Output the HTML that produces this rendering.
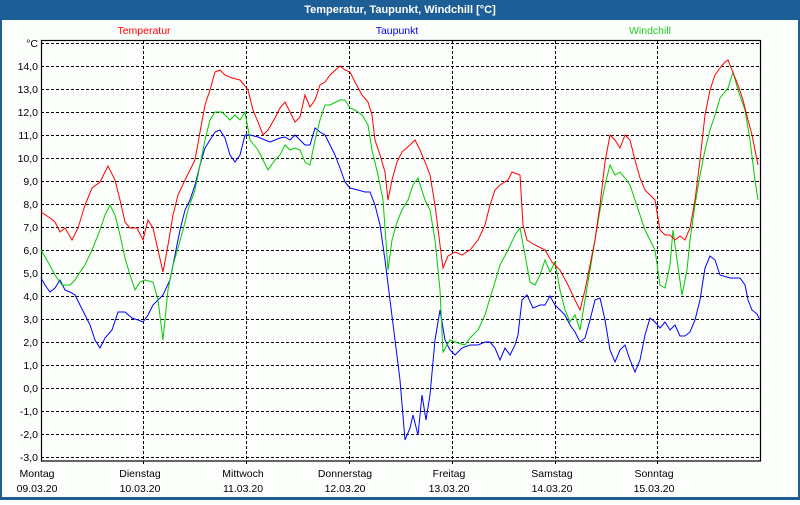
<!DOCTYPE html>
<html><head><meta charset="utf-8"><style>
html,body{margin:0;padding:0;}
body{width:800px;height:500px;overflow:hidden;background:#fff;font-family:"Liberation Sans",sans-serif;}
</style></head><body>
<svg width="800" height="500" xmlns="http://www.w3.org/2000/svg" font-family="Liberation Sans, sans-serif" font-size="10.5">
<rect x="0" y="0" width="800" height="500" fill="#1d5e96"/>
<rect x="2" y="20" width="796" height="477" fill="#fcfefc"/>
<text x="400" y="13" fill="#fff" font-weight="bold" font-size="11" text-anchor="middle">Temperatur, Taupunkt, Windchill [°C]</text>
<text x="144" y="34" fill="#f00" text-anchor="middle">Temperatur</text>
<text x="397" y="34" fill="#00f" text-anchor="middle">Taupunkt</text>
<text x="650" y="34" fill="#2c2" text-anchor="middle">Windchill</text>
<g stroke="#000" stroke-dasharray="3,2" stroke-width="1">
<line x1="41" x2="760" y1="43.5" y2="43.5"/>
<line x1="41" x2="760" y1="66.5" y2="66.5"/><line x1="41" x2="760" y1="89.5" y2="89.5"/>
<line x1="41" x2="760" y1="112.5" y2="112.5"/><line x1="41" x2="760" y1="135.5" y2="135.5"/>
<line x1="41" x2="760" y1="158.5" y2="158.5"/><line x1="41" x2="760" y1="181.5" y2="181.5"/>
<line x1="41" x2="760" y1="204.5" y2="204.5"/><line x1="41" x2="760" y1="227.5" y2="227.5"/>
<line x1="41" x2="760" y1="250.5" y2="250.5"/><line x1="41" x2="760" y1="273.5" y2="273.5"/>
<line x1="41" x2="760" y1="296.5" y2="296.5"/><line x1="41" x2="760" y1="319.5" y2="319.5"/>
<line x1="41" x2="760" y1="342.5" y2="342.5"/><line x1="41" x2="760" y1="365.5" y2="365.5"/>
<line x1="41" x2="760" y1="388.5" y2="388.5"/><line x1="41" x2="760" y1="411.5" y2="411.5"/>
<line x1="41" x2="760" y1="434.5" y2="434.5"/><line x1="41" x2="760" y1="457.5" y2="457.5"/>
<line x1="143.5" x2="143.5" y1="41" y2="465"/><line x1="246.5" x2="246.5" y1="41" y2="465"/>
<line x1="349.5" x2="349.5" y1="41" y2="465"/><line x1="452.5" x2="452.5" y1="41" y2="465"/>
<line x1="555.5" x2="555.5" y1="41" y2="465"/><line x1="657.5" x2="657.5" y1="41" y2="465"/>
</g>
<rect x="41.5" y="40.5" width="719" height="420.5" fill="none" stroke="#000" stroke-width="1.2"/>
<g font-size="10.5" fill="#000" text-anchor="end">
<text x="38" y="47">°C</text>
<text x="38" y="70">14,0</text><text x="38" y="93">13,0</text><text x="38" y="116">12,0</text>
<text x="38" y="139">11,0</text><text x="38" y="162">10,0</text><text x="38" y="185">9,0</text>
<text x="38" y="208">8,0</text><text x="38" y="231">7,0</text><text x="38" y="254">6,0</text>
<text x="38" y="277">5,0</text><text x="38" y="300">4,0</text><text x="38" y="323">3,0</text>
<text x="38" y="346">2,0</text><text x="38" y="369">1,0</text><text x="38" y="392">0,0</text>
<text x="38" y="415">-1,0</text><text x="38" y="438">-2,0</text><text x="38" y="461">-3,0</text>
</g>
<g font-size="10.5" fill="#000" text-anchor="middle">
<text x="37" y="477">Montag</text><text x="37" y="492">09.03.20</text>
<text x="140" y="477">Dienstag</text><text x="140" y="492">10.03.20</text>
<text x="243" y="477">Mittwoch</text><text x="243" y="492">11.03.20</text>
<text x="345" y="477">Donnerstag</text><text x="345" y="492">12.03.20</text>
<text x="449" y="477">Freitag</text><text x="449" y="492">13.03.20</text>
<text x="552" y="477">Samstag</text><text x="552" y="492">14.03.20</text>
<text x="654" y="477">Sonntag</text><text x="654" y="492">15.03.20</text>
</g>
<polyline fill="none" stroke="#00f" stroke-width="1" points="41,278 45,285 50,292 55,288 60,280 65,290 70,292 75,295 80,305 85,315 90,325 95,340 100,348 105,338 112,330 118,312 125,312 132,318 138,320 143,322 148,315 153,305 158,300 163,295 170,280 175,255 180,230 185,210 190,200 195,185 200,165 205,148 210,140 215,132 220,130 225,138 230,155 235,162 240,155 245,135 250,135 258,137 265,140 270,142 275,140 280,138 285,137 290,140 295,135 300,140 305,145 310,145 315,128 320,132 325,135 330,145 335,155 340,168 345,182 350,188 358,190 365,192 370,192 375,205 380,225 385,260 390,300 395,340 400,380 405,440 410,428 413,415 418,435 422,395 426,420 430,395 435,340 440,310 445,340 450,350 455,355 462,348 470,345 478,345 485,342 490,342 495,348 500,360 505,348 510,355 515,345 518,335 522,300 527,295 533,308 540,305 545,305 550,296 555,305 560,310 565,315 570,325 575,332 580,342 585,338 590,320 595,300 600,298 605,320 610,350 615,362 620,350 625,345 630,360 635,372 640,360 645,335 650,318 655,322 660,328 665,322 670,330 675,325 680,336 685,336 690,332 695,320 700,300 705,268 710,256 715,260 720,275 730,278 740,278 745,285 748,300 752,310 757,314 760,320"/>
<polyline fill="none" stroke="#0c0" stroke-width="1" points="41,250 48,262 55,275 62,285 70,285 75,280 80,272 85,265 92,250 100,230 105,215 110,205 115,215 120,235 125,258 130,275 135,290 140,282 145,280 153,282 158,300 163,340 168,290 173,265 178,248 183,230 188,210 195,190 200,165 205,140 210,120 215,112 222,112 230,120 235,115 240,120 245,112 250,140 258,150 263,160 268,170 275,160 280,155 285,145 290,150 295,148 300,150 305,162 310,165 315,140 320,120 325,105 330,105 340,100 345,100 350,108 355,110 362,115 368,125 372,150 378,175 383,200 388,270 392,240 397,222 402,210 408,200 413,185 418,178 425,200 430,210 435,240 440,290 443,352 450,340 458,343 465,345 470,338 478,330 485,315 490,298 495,282 500,265 508,250 515,235 520,228 525,255 530,282 535,285 540,275 545,260 550,272 555,262 560,290 565,310 570,322 575,315 580,330 585,300 590,270 595,240 600,210 605,185 610,165 615,175 620,172 625,178 630,185 635,200 640,215 645,230 650,240 655,250 660,285 665,288 670,265 673,230 677,260 682,295 687,270 690,240 695,205 700,175 705,150 710,130 715,115 720,98 728,88 733,72 738,90 745,110 750,140 755,180 758,200"/>
<polyline fill="none" stroke="#f00" stroke-width="1" points="41,212 50,218 55,222 60,232 65,228 72,240 78,228 85,205 92,188 100,182 108,166 115,180 120,200 125,222 130,228 137,228 143,240 148,220 153,228 158,250 163,272 168,245 173,215 178,195 185,180 190,170 195,160 200,132 205,105 210,90 215,72 220,70 225,75 232,78 240,80 245,86 248,90 253,110 258,122 263,135 268,130 275,118 280,108 285,102 290,112 295,122 300,117 305,95 310,107 315,100 320,85 325,82 330,75 340,66 345,70 350,72 355,82 362,95 368,102 372,115 375,140 380,155 385,172 388,200 392,180 397,162 402,152 410,145 415,140 420,150 425,162 430,175 435,205 440,245 443,268 448,256 455,252 462,255 470,250 478,240 485,225 490,205 495,190 500,185 508,180 512,172 520,175 523,225 527,240 535,245 545,250 552,262 560,270 568,285 575,300 580,310 585,290 590,265 595,240 600,205 605,162 610,135 615,140 620,148 625,135 630,140 635,160 640,178 645,190 650,195 655,200 660,230 665,235 670,235 675,240 680,236 685,240 690,228 695,200 700,160 705,115 710,90 715,75 720,68 725,62 728,60 732,70 738,85 743,100 748,120 752,135 758,165"/>
</svg>
</body></html>
